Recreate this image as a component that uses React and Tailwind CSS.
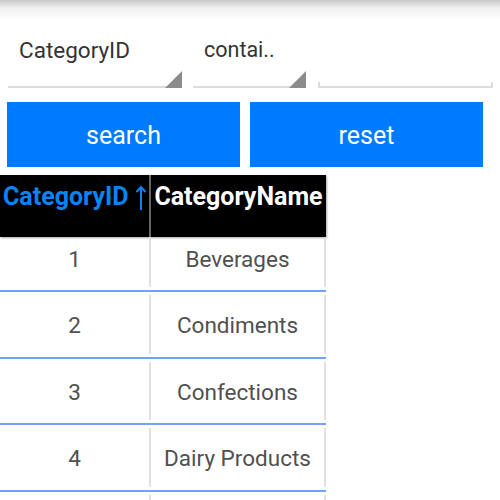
const rows = [
  { id: 1, name: "Beverages", first: true },
  { id: 2, name: "Condiments" },
  { id: 3, name: "Confections" },
  { id: 4, name: "Dairy Products" },
  { id: "", name: "" },
];

const Select = ({ label, className, textClass }) => (
  <div className={`relative h-[68px] border-b-2 border-[#dcdcdc] ${className}`}>
    <span className={`absolute left-[11px] top-[16px] leading-[28px] text-[#333] whitespace-nowrap ${textClass}`}>{label}</span>
    <svg className="absolute right-0 bottom-[-2px] w-[17px] h-[17px]" viewBox="0 0 17 17">
      <path d="M17 0V17H0Z" fill="#8c8c8c" />
    </svg>
  </div>
);

export default function App() {
  return (
    <div className="w-[500px] h-[500px] overflow-hidden bg-white font-['Roboto',sans-serif]">
      <div className="h-5 bg-gradient-to-b from-[#c8c8c8] via-[#f0f0f0] via-40% to-white" />
      <div className="flex pl-[8px] pr-[7px]">
        <Select label="CategoryID" textClass="text-[22.5px]" className="w-[174px] mr-[11px]" />
        <Select label="contai.." textClass="text-[21.5px]" className="w-[113px] mr-[12px]" />
        <div className="relative w-[175px] h-[68px] border-b-2 border-[#dcdcdc]">
          <div className="absolute left-0 bottom-0 w-[2px] h-[4px] bg-[#dcdcdc]" />
          <div className="absolute right-0 bottom-0 w-[2px] h-[4px] bg-[#dcdcdc]" />
        </div>
      </div>
      <div className="flex gap-[10px] pl-[7px] pt-[14px]">
        <button className="w-[233px] h-[65px] pt-[3px] bg-[#007bff] text-white text-[25px]">search</button>
        <button className="w-[233px] h-[65px] pt-[3px] bg-[#007bff] text-white text-[25px]">reset</button>
      </div>
      <div className="w-[326px] mt-[8px]">
        <div className="flex h-[62px] bg-black shadow-[1px_1px_2px_rgba(0,0,0,0.35)] font-bold">
          <div className="relative w-[151px] pt-[6px] pl-[3px] text-[25px] leading-[32px] text-[#0a84f5] whitespace-nowrap border-r-2 border-[#666]">
            CategoryID
            <svg className="absolute left-[135px] top-[10px] w-[12px] h-[25px]" viewBox="0 0 12 25" fill="none" stroke="#0a84f5" strokeWidth="2">
              <path d="M6 25V2M1.5 7L6 2l4.5 5" />
            </svg>
          </div>
          <div className="flex-1 pt-[6px] text-[25px] leading-[32px] text-center text-white whitespace-nowrap">CategoryName</div>
        </div>
        {rows.map((r, i) => (
          <div key={i} className={`flex border-b-[2.5px] border-[#6fa3fb] pb-[3px] text-[22.5px] leading-[30px] text-[#505050] ${r.first ? "h-[55px]" : "h-[66.7px] pt-[3px]"}`}>
            <div className={`w-[151px] text-center border-r-2 border-[#e0e0e0] ${r.first ? "pt-[7px]" : "pt-[15px]"}`}>{r.id}</div>
            <div className={`flex-1 text-center border-r-2 border-[#e0e0e0] ${r.first ? "pt-[7px]" : "pt-[15px]"}`}>{r.name}</div>
          </div>
        ))}
      </div>
    </div>
  );
}
